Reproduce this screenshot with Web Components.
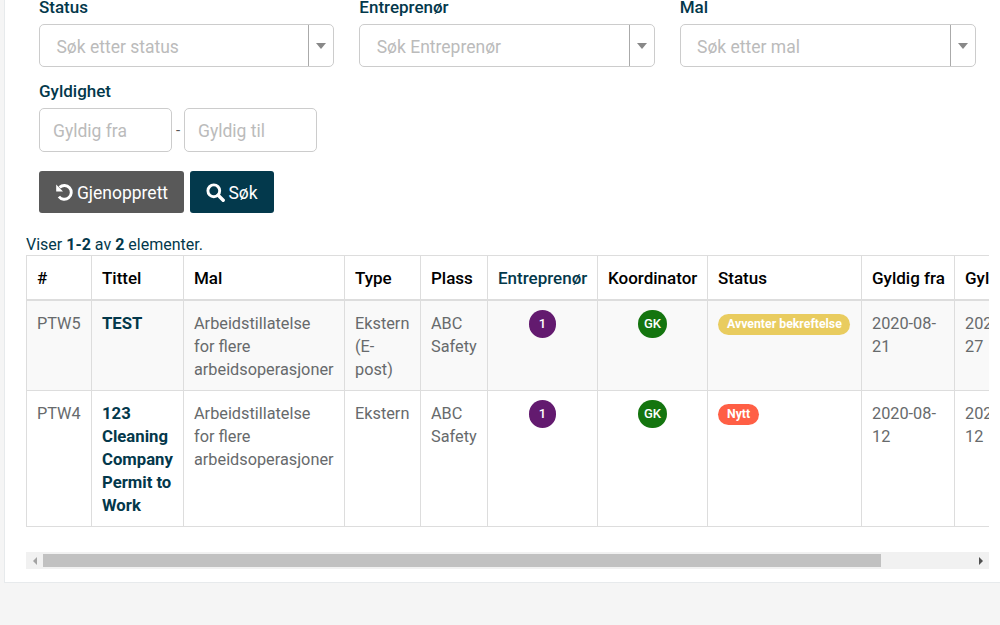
<!DOCTYPE html>
<html lang="no"><head><meta charset="utf-8"><title>Arbeidstillatelser</title>
<style>
html,body{margin:0;height:625px;overflow:hidden;background:#f5f5f5;font-family:Roboto,"Liberation Sans",sans-serif;color:#676a6c}
</style></head><body>
<app-panel>
  <search-form slot="form"></search-form>
  <results-table slot="table"></results-table>
</app-panel>
<script>
function def(name, css, html, init){
  customElements.define(name, class extends HTMLElement{
    connectedCallback(){
      if(this.shadowRoot) return;
      const r=this.attachShadow({mode:'open'});
      r.innerHTML='<style>'+css+'</style>'+(typeof html==='function'?html(this):html);
      if(init) init(this,r);
    }
  });
}
def('app-panel',`:host{display:block;box-sizing:border-box;height:583px;margin:0 -2px 0 4px;background:#fff;border:1px solid #e7eaec;border-top:0;overflow:hidden}
.form{display:block;padding-left:34px}.table{display:block;padding:0 0 0 21px}`,
`<div class="form"><slot name="form"></slot></div><div class="table"><slot name="table"></slot></div>`);

def('search-select',`:host{display:block;width:295.33px;font-family:Roboto,sans-serif}
label{display:block;font-size:17px;font-weight:500;line-height:15px;color:#03384b;margin-bottom:9px}
.box{box-sizing:border-box;height:43px;border:1px solid #ccc;border-radius:5px;display:flex;background:#fff}
.ph{flex:1;padding:2px 0 0 16.4px;font-size:17.5px;line-height:41px;color:#bbb;white-space:nowrap}
.arrow{width:24px;border-left:1px solid #aaa;display:flex;align-items:center;justify-content:center}
.arrow i{display:block;width:0;height:0;border:5px solid transparent;border-top:6px solid #888;border-bottom:0}`,
h=>`<label>${h.getAttribute('label')}</label><div class="box"><div class="ph">${h.getAttribute('placeholder')}</div><div class="arrow"><i></i></div></div>`);

def('date-range',`:host{display:block;font-family:Roboto,sans-serif}
label{display:block;font-size:17px;font-weight:500;line-height:14px;color:#03384b;margin-bottom:10px}
.row{display:flex;align-items:center}
.in{box-sizing:border-box;width:133px;height:44px;border:1px solid #ccc;border-radius:5px;padding:1px 0 0 13px;font-size:17.5px;line-height:42px;color:#bbb}
.sep{width:12px;text-align:center;font-size:15px;color:#555}`,
`<label>Gyldighet</label><div class="row"><div class="in">Gyldig fra</div><div class="sep">-</div><div class="in">Gyldig til</div></div>`);

def('app-button',`:host{display:inline-flex;align-items:center;justify-content:center;box-sizing:border-box;height:42px;padding-top:1px;border-radius:3px;color:#fff;font-family:Roboto,sans-serif;font-size:17.5px;gap:3px}
svg{display:block;margin-top:-2px}`,
h=>`<slot name="icon"></slot><slot></slot>`);

def('search-form',`:host{display:block}
.cols{display:flex;gap:25px}
.cols search-select:last-child{width:296px}
.date{margin-top:17px}
.btns{display:flex;gap:6px;margin-top:19px}
.b1{width:145px;background:#595959}.b2{width:84px;background:#03394c}`,
`<div class="cols">
<search-select label="Status" placeholder="Søk etter status"></search-select>
<search-select label="Entreprenør" placeholder="Søk Entreprenør"></search-select>
<search-select label="Mal" placeholder="Søk etter mal"></search-select>
</div>
<div class="date"><date-range></date-range></div>
<div class="btns">
<app-button class="b1"><svg slot="icon" width="19" height="19" viewBox="0 0 19 19"><path d="M4.6 4.4A6.9 6.9 0 1 1 3.9 13.6" fill="none" stroke="#fff" stroke-width="2.9"/><path d="M1.2 1.6V8.4H8z" fill="#fff"/></svg>Gjenopprett</app-button>
<app-button class="b2"><svg slot="icon" width="19" height="19" viewBox="0 0 19 19"><circle cx="7.8" cy="7.8" r="5.9" fill="none" stroke="#fff" stroke-width="2.9"/><path d="M12.2 12.2L17.2 17.2" stroke="#fff" stroke-width="3.4" stroke-linecap="round"/></svg>Søk</app-button>
</div>`);

def('round-badge',`:host{display:inline-block;box-sizing:border-box;height:28px;min-width:27px;padding:0 6px;border-radius:14px;color:#fff;font-size:13px;font-weight:500;line-height:28px;text-align:center;background:var(--c)}`,`<slot></slot>`);
def('status-pill',`:host{display:inline-block;height:21px;padding:0 var(--pr,8px) 0 9px;border-radius:11px;color:#fff;font-size:12.3px;font-weight:700;line-height:21px;white-space:nowrap;background:var(--c)}`,`<slot></slot>`);
def('h-scrollbar',`:host{display:flex;height:17px;background:#f1f1f1;align-items:center}
.end{width:17px;height:17px;display:flex;align-items:center;justify-content:center;flex:none}
.l{border:4px solid transparent;border-left:0;border-right:4px solid #a3a3a3;width:0;height:0}
.r{border:4px solid transparent;border-right:0;border-left:4px solid #505050;width:0;height:0}
.track{flex:1;display:block}.thumb{width:838px;height:13px;background:#c1c1c1}`,
`<div class="end"><div class="l"></div></div><div class="track"><div class="thumb"></div></div><div class="end"><div class="r"></div></div>`);

const rows=[
 ['PTW5','TEST','Ekstern (E-post)','1','GK','Avventer bekreftelse','--c:#e9cc5f','2020-08-21','2020-08-27',true],
 ['PTW4','123 Cleaning Company Permit to Work','Ekstern','1','GK','Nytt','--c:#ff5f45;--pr:9px','2020-08-12','2020-08-12',false]
];
def('results-table',`:host{display:block;width:963px;font-family:Roboto,sans-serif}
.info{font-size:16px;line-height:20px;color:#03384b;padding-top:22px;height:9px}
.info b{font-weight:700}
.wrap{overflow:hidden;width:963px;margin-top:11px}
table{border-collapse:collapse;table-layout:fixed;width:1021px;font-size:16.3px;line-height:23px}
th,td{border:1px solid #ddd;padding:11px 10px 9px;text-align:left;vertical-align:top}
th{font-size:17px;font-weight:500;color:#000;border-bottom:2px solid #ddd;white-space:nowrap;overflow:hidden}
th.t{color:#03384b}
td{color:#676a6c}
tr.alt td{background:#f9f9f9}
td.title{font-size:16.7px;font-weight:700;color:#03384b}
td.c{text-align:center;padding-top:9px;padding-bottom:0;line-height:0}
td.s{padding-top:13px;line-height:0}
.bar{margin-top:25px}`,
`<div class="info">Viser <b>1-2</b> av <b>2</b> elementer.</div>
<div class="wrap"><table><colgroup><col style="width:65px"><col style="width:92px"><col style="width:161px"><col style="width:76px"><col style="width:67px"><col style="width:110px"><col style="width:110px"><col style="width:154px"><col style="width:93px"><col style="width:93px"></colgroup>
<thead><tr><th>#</th><th>Tittel</th><th>Mal</th><th>Type</th><th>Plass</th><th class="t">Entreprenør</th><th>Koordinator</th><th>Status</th><th>Gyldig fra</th><th>Gyldig til</th></tr></thead>
<tbody>${rows.map(r=>`<tr class="${r[9]?'alt':''}"><td>${r[0]}</td><td class="title">${r[1]}</td><td>Arbeidstillatelse for flere arbeidsoperasjoner</td><td>${r[2]}</td><td>ABC Safety</td><td class="c"><round-badge style="--c:#631a6f">${r[3]}</round-badge></td><td class="c"><round-badge style="--c:#14750f">${r[4]}</round-badge></td><td class="s"><status-pill style="${r[6]}">${r[5]}</status-pill></td><td>${r[7]}</td><td>${r[8]}</td></tr>`).join('')}</tbody></table></div>
<h-scrollbar class="bar"></h-scrollbar>`);
</script>
</body></html>
